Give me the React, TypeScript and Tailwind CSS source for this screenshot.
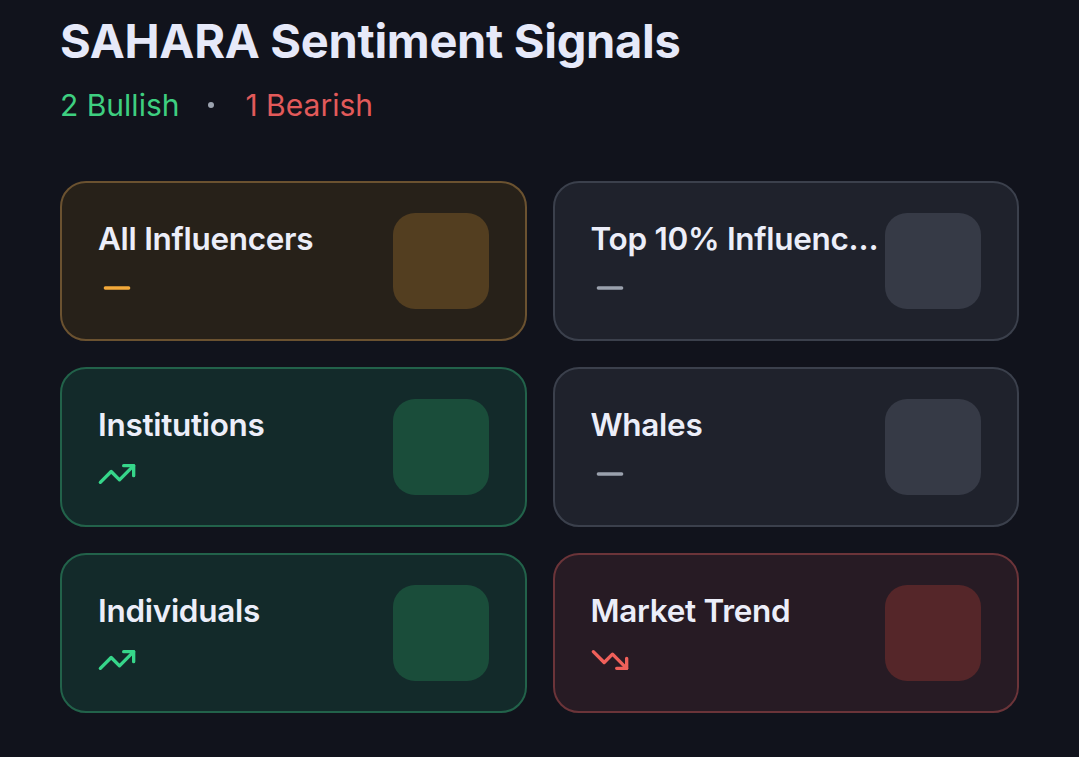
import React from "react";

type Tone = "amber" | "gray" | "green" | "red";

const toneStyles: Record<Tone, { card: string; square: string; icon: string }> = {
  amber: { card: "bg-[#272119] border-[#6b5230]", square: "bg-[#533e20]", icon: "text-[#f3a93a]" },
  gray: { card: "bg-[#1f222c] border-[#3b404c]", square: "bg-[#363a46]", icon: "text-[#9aa1ad]" },
  green: { card: "bg-[#132a2a] border-[#22624a]", square: "bg-[#1a4d3a]", icon: "text-[#36d68a]" },
  red: { card: "bg-[#271b24] border-[#6b3439]", square: "bg-[#552629]", icon: "text-[#f0605a]" },
};

function MinusIcon() {
  return (
    <svg width="40" height="40" viewBox="0 0 24 24" fill="none" stroke="currentColor" strokeWidth="2" strokeLinecap="round" strokeLinejoin="round">
      <path d="M5 12h14" />
    </svg>
  );
}

function UpIcon() {
  return (
    <svg width="40" height="40" viewBox="0 0 24 24" fill="none" stroke="currentColor" strokeWidth="2" strokeLinecap="round" strokeLinejoin="round">
      <path d="M16 7h6v6" />
      <path d="m22 7-8.5 8.5-5-5L2 17" />
    </svg>
  );
}

function DownIcon() {
  return (
    <svg width="40" height="40" viewBox="0 0 24 24" fill="none" stroke="currentColor" strokeWidth="2" strokeLinecap="round" strokeLinejoin="round">
      <path d="M16 17h6v-6" />
      <path d="m22 17-8.5-8.5-5 5L2 7" />
    </svg>
  );
}

function Card({ title, tone, trend }: { title: string; tone: Tone; trend: "flat" | "up" | "down" }) {
  const s = toneStyles[tone];
  return (
    <div className={`h-[160px] rounded-[26px] border-2 ${s.card} flex items-center justify-between pl-[36px] pr-[36px]`}>
      <div className="flex flex-col min-w-0">
        <div className="text-[31.5px] leading-[48px] font-semibold text-[#eceef9] truncate tracking-[-0.3px] mt-[1px]">{title}</div>
        <div className={`${s.icon} mt-[5px] -ml-[1px] h-[40px]`}>
          {trend === "flat" ? <MinusIcon /> : trend === "up" ? <UpIcon /> : <DownIcon />}
        </div>
      </div>
      <div className={`w-[96px] h-[96px] rounded-[22px] ${s.square} shrink-0 ml-[4px]`} />
    </div>
  );
}

export default function App() {
  return (
    <div className="w-[1079px] h-[757px] bg-[#11131c] px-[60px] pt-[17px]" style={{ fontFamily: "Inter, 'Noto Sans', sans-serif" }}>
      <h1 className="text-[47px] leading-[48px] font-bold text-[#e6e9f9] tracking-[-0.3px]">SAHARA Sentiment Signals</h1>
      <div className="flex items-center mt-[20px] text-[30px] leading-[40px]">
        <span className="text-[#3ecf80]">2 Bullish</span>
        <span className="ml-[29px] mr-[31px] w-[6px] h-[6px] rounded-full bg-[#9ca3af]" />
        <span className="text-[#e25a5a]">1 Bearish</span>
      </div>
      <div className="grid grid-cols-2 gap-[26px] mt-[56px]">
        <Card title="All Influencers" tone="amber" trend="flat" />
        <Card title="Top 10% Influencers" tone="gray" trend="flat" />
        <Card title="Institutions" tone="green" trend="up" />
        <Card title="Whales" tone="gray" trend="flat" />
        <Card title="Individuals" tone="green" trend="up" />
        <Card title="Market Trend" tone="red" trend="down" />
      </div>
    </div>
  );
}
